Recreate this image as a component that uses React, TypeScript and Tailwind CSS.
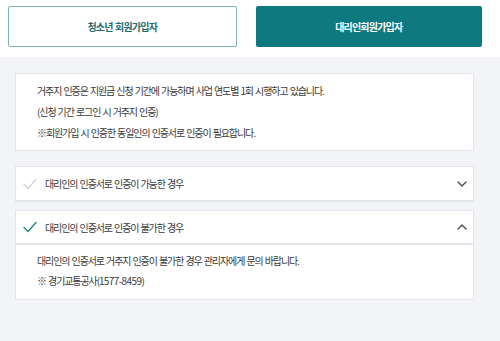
import React from "react";

const font = { fontFamily: '"Noto Sans CJK KR", "Noto Sans", sans-serif' };

function Check({ color }: { color: string }) {
  return (
    <svg width="14" height="12" viewBox="0 0 14 12" fill="none">
      <path d="M1 6.5 L5 10.5 L13 1.5" stroke={color} strokeWidth="1.4" strokeLinecap="round" strokeLinejoin="round" />
    </svg>
  );
}

function Chevron({ up }: { up?: boolean }) {
  return (
    <svg width="10" height="6" viewBox="0 0 10 6" fill="none">
      <path d={up ? "M1 5 L5 1 L9 5" : "M1 1 L5 5 L9 1"} stroke="#444" strokeWidth="1.3" strokeLinecap="round" strokeLinejoin="round" />
    </svg>
  );
}

export default function App() {
  return (
    <div className="w-[500px] h-[341px] bg-[#f3f4f8] text-[#383838]" style={font}>
      <div className="bg-white flex gap-[19px] pl-[8px] pr-[18px] pt-[6px] pb-[10px]">
        <div className="flex-1 h-[41px] flex items-center justify-center border border-[#7fb3b6] rounded-[2px] text-[10px] font-bold text-[#1f6b70] tracking-[-0.8px] [word-spacing:1px]">
          청소년 회원가입자
        </div>
        <div className="flex-1 h-[41px] flex items-center justify-center bg-[#0e7a80] rounded-[2px] text-[10px] font-bold text-white tracking-[-0.8px]">
          대리인회원가입자
        </div>
      </div>
      <div className="pl-[15px] pr-[26px] pt-[16px] flex flex-col">
        <div className="bg-white border border-[#e3e5ea] pl-[21px] pt-[6px] pb-[7px] text-[10px] tracking-[-1.1px] [word-spacing:1px] leading-[21px]">
          <p>거주지 인증은 지원금 신청 기간에 가능하며 사업 연도별 1회 시행하고 있습니다.</p>
          <p>(신청 기간 로그인 시 거주지 인증)</p>
          <p>※회원가입 시 인증한 동일인의 인증서로 인증이 필요합니다.</p>
        </div>
        <div className="mt-[15px] bg-white border border-[#e3e5ea] border-b-2 h-[36px] flex items-center pl-[7px] pr-[6px]">
          <Check color="#cfd2d6" />
          <span className="ml-[8px] flex-1 text-[10px] tracking-[-1.1px] [word-spacing:1px]">대리인의 인증서로 인증이 가능한 경우</span>
          <Chevron />
        </div>
        <div className="mt-[8px] bg-white border border-[#e3e5ea]">
          <div className="h-[34px] flex items-center pl-[7px] pr-[6px] border-b-2 border-[#e3e5ea]">
            <Check color="#1f8a7a" />
            <span className="ml-[8px] flex-1 text-[10px] tracking-[-1.1px] [word-spacing:1px]">대리인의 인증서로 인증이 불가한 경우</span>
            <Chevron up />
          </div>
          <div className="pl-[21px] pt-[6px] pb-[8px] text-[10px] tracking-[-1.1px] [word-spacing:1px] leading-[20px]">
            <p>대리인의 인증서로 거주지 인증이 불가한 경우 관리자에게 문의 바랍니다.</p>
            <p>※ 경기교통공사(<span className="tracking-[-0.6px]">1577-8459</span>)</p>
          </div>
        </div>
      </div>
    </div>
  );
}
